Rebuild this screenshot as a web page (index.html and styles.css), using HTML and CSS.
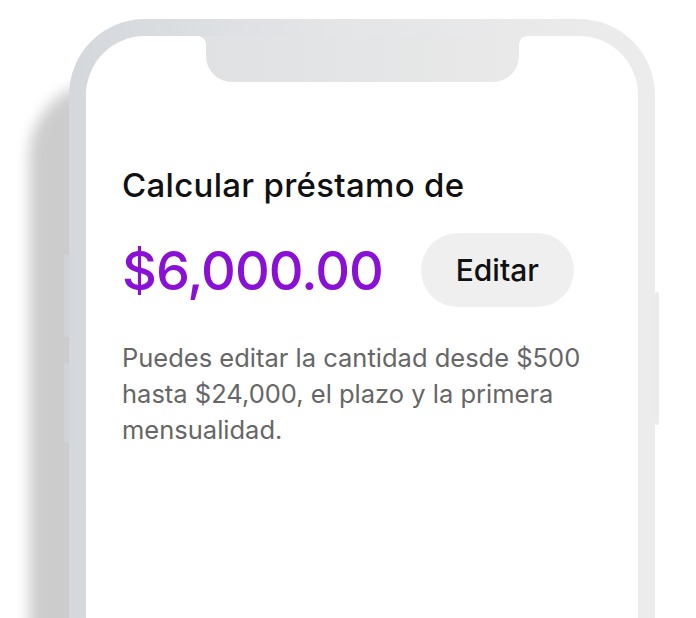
FILE: index.html
```html
<!DOCTYPE html>
<html lang="es">
<head>
    <meta charset="UTF-8">
    <meta name="viewport" content="width=device-width, initial-scale=1.0">
    <title>Calcular préstamo</title>
    <link rel="stylesheet" href="styles.css">
</head>
<body>

    <div class="phone">
        <span class="side-btn side-left top"></span>
        <span class="side-btn side-left bottom"></span>
        <span class="side-btn side-right"></span>

        <div class="screen">
            <div class="notch"></div>

            <div class="content">
                <h1 class="title">Calcular préstamo de</h1>
                <div class="amount-row">
                    <span class="amount">$6,000.00</span>
                    <button class="edit-btn">Editar</button>
                </div>
                <p class="hint">Puedes editar la cantidad desde $500 hasta $24,000, el plazo y la primera mensualidad.</p>
            </div>
        </div>
    </div>

</body>
</html>
```

FILE: styles.css
```css
html, body { height: 618px; overflow: hidden; }
body {
    margin: 0;
    background: #fff;
    font-family: Inter, "Noto Sans", sans-serif;
}
.phone {
    position: relative;
    margin: 19px 0 0 69px;
    width: 586px;
    height: 599px;
    padding: 17px 17px 0;
    box-sizing: border-box;
    border-radius: 76px 76px 0 0;
    background: linear-gradient(90deg, #d4d8dc 0%, #e4e5e7 45%, #ececec 100%);
    box-shadow: -40px 62px 14px rgba(0, 0, 0, 0.2);
}
.side-btn {
    position: absolute;
    width: 5px;
    border-radius: 2px;
}
.side-left { left: -5px; background: #d1d4d7; }
.side-left.top { top: 236px; height: 82px; }
.side-left.bottom { top: 344px; height: 80px; }
.side-right { right: -4px; top: 273px; height: 133px; width: 4px; background: #ebebeb; }

.screen {
    position: relative;
    height: 100%;
    background: #fff;
    border-radius: 59px 59px 0 0;
}
.notch {
    position: absolute;
    top: 0;
    left: 50%;
    width: 313px;
    height: 46px;
    margin-left: -156px;
    background: linear-gradient(90deg, #dfe1e3, #e9e9e9);
    border-radius: 0 0 26px 26px;
}
.notch::before,
.notch::after {
    content: "";
    position: absolute;
    top: 0;
    width: 8px;
    height: 8px;
}
.notch::before {
    left: -8px;
    background: radial-gradient(circle at 0 100%, transparent 7.5px, #dfe1e3 8px);
}
.notch::after {
    right: -8px;
    background: radial-gradient(circle at 100% 100%, transparent 7.5px, #e9e9e9 8px);
}
.content { padding: 129px 36px 0; }
.title {
    margin: 0;
    font-size: 33px;
    font-weight: 500;
    line-height: 40px;
    letter-spacing: 0.3px;
    color: #111;
}
.amount-row {
    display: flex;
    align-items: center;
    gap: 38px;
    margin-top: 28px;
}
.amount {
    font-size: 54px;
    font-weight: 500;
    color: #8a10d6;
    letter-spacing: -1px;
}
.edit-btn {
    width: 153px;
    height: 74px;
    border: none;
    border-radius: 37px;
    background: #efefef;
    font-family: inherit;
    font-size: 30px;
    font-weight: 500;
    color: #111;
}
.hint {
    margin: 33px 0 0;
    font-size: 25.5px;
    line-height: 36px;
    color: #666;
}
```
